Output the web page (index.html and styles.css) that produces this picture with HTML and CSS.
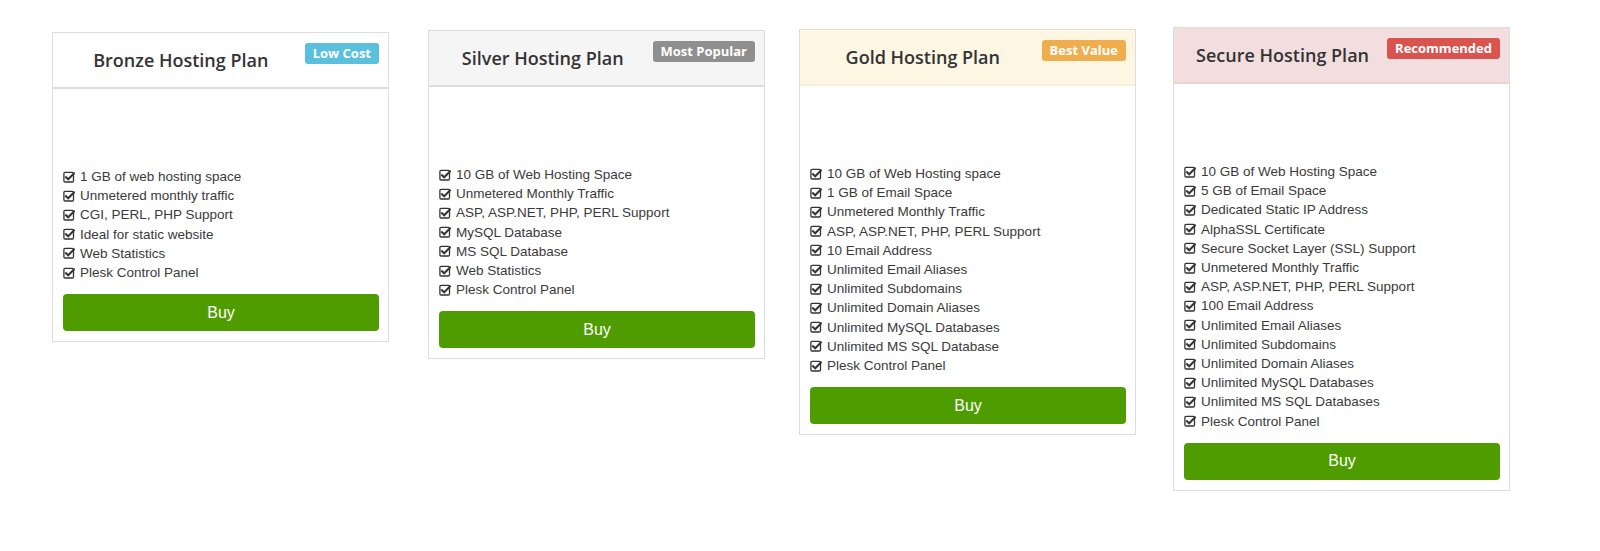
FILE: index.html
```html
<!DOCTYPE html>
<html>
<head>
<meta charset="utf-8">
<link rel="stylesheet" href="styles.css">
</head>
<body>
<svg width="0" height="0" class="defs">
  <symbol id="chk" viewBox="0 0 12 12">
    <rect x="0.9" y="1.4" width="9.6" height="9.6" rx="1.2" fill="none" stroke="#333" stroke-width="1.3"/>
    <path d="M3 6.2 L5.2 8.3 L11 2.3" fill="none" stroke="#333" stroke-width="2" stroke-linecap="square"/>
  </symbol>
</svg>
<div class="plans">
  <div class="plan plan-bronze">
    <div class="plan-head">
      <h3 class="plan-title">Bronze Hosting Plan</h3>
      <span class="badge badge-info">Low Cost</span>
    </div>
    <div class="plan-body">
      <ul class="features">
        <li><svg class="ico"><use href="#chk"/></svg>1 GB of web hosting space</li>
        <li><svg class="ico"><use href="#chk"/></svg>Unmetered monthly traffic</li>
        <li><svg class="ico"><use href="#chk"/></svg>CGI, PERL, PHP Support</li>
        <li><svg class="ico"><use href="#chk"/></svg>Ideal for static website</li>
        <li><svg class="ico"><use href="#chk"/></svg>Web Statistics</li>
        <li><svg class="ico"><use href="#chk"/></svg>Plesk Control Panel</li>
      </ul>
      <button class="buy">Buy</button>
    </div>
  </div>

  <div class="plan plan-silver">
    <div class="plan-head">
      <h3 class="plan-title">Silver Hosting Plan</h3>
      <span class="badge badge-default">Most Popular</span>
    </div>
    <div class="plan-body">
      <ul class="features">
        <li><svg class="ico"><use href="#chk"/></svg>10 GB of Web Hosting Space</li>
        <li><svg class="ico"><use href="#chk"/></svg>Unmetered Monthly Traffic</li>
        <li><svg class="ico"><use href="#chk"/></svg>ASP, ASP.NET, PHP, PERL Support</li>
        <li><svg class="ico"><use href="#chk"/></svg>MySQL Database</li>
        <li><svg class="ico"><use href="#chk"/></svg>MS SQL Database</li>
        <li><svg class="ico"><use href="#chk"/></svg>Web Statistics</li>
        <li><svg class="ico"><use href="#chk"/></svg>Plesk Control Panel</li>
      </ul>
      <button class="buy">Buy</button>
    </div>
  </div>

  <div class="plan plan-gold">
    <div class="plan-head">
      <h3 class="plan-title">Gold Hosting Plan</h3>
      <span class="badge badge-warning">Best Value</span>
    </div>
    <div class="plan-body">
      <ul class="features">
        <li><svg class="ico"><use href="#chk"/></svg>10 GB of Web Hosting space</li>
        <li><svg class="ico"><use href="#chk"/></svg>1 GB of Email Space</li>
        <li><svg class="ico"><use href="#chk"/></svg>Unmetered Monthly Traffic</li>
        <li><svg class="ico"><use href="#chk"/></svg>ASP, ASP.NET, PHP, PERL Support</li>
        <li><svg class="ico"><use href="#chk"/></svg>10 Email Address</li>
        <li><svg class="ico"><use href="#chk"/></svg>Unlimited Email Aliases</li>
        <li><svg class="ico"><use href="#chk"/></svg>Unlimited Subdomains</li>
        <li><svg class="ico"><use href="#chk"/></svg>Unlimited Domain Aliases</li>
        <li><svg class="ico"><use href="#chk"/></svg>Unlimited MySQL Databases</li>
        <li><svg class="ico"><use href="#chk"/></svg>Unlimited MS SQL Database</li>
        <li><svg class="ico"><use href="#chk"/></svg>Plesk Control Panel</li>
      </ul>
      <button class="buy">Buy</button>
    </div>
  </div>

  <div class="plan plan-secure">
    <div class="plan-head">
      <h3 class="plan-title">Secure Hosting Plan</h3>
      <span class="badge badge-danger">Recommended</span>
    </div>
    <div class="plan-body">
      <ul class="features">
        <li><svg class="ico"><use href="#chk"/></svg>10 GB of Web Hosting Space</li>
        <li><svg class="ico"><use href="#chk"/></svg>5 GB of Email Space</li>
        <li><svg class="ico"><use href="#chk"/></svg>Dedicated Static IP Address</li>
        <li><svg class="ico"><use href="#chk"/></svg>AlphaSSL Certificate</li>
        <li><svg class="ico"><use href="#chk"/></svg>Secure Socket Layer (SSL) Support</li>
        <li><svg class="ico"><use href="#chk"/></svg>Unmetered Monthly Traffic</li>
        <li><svg class="ico"><use href="#chk"/></svg>ASP, ASP.NET, PHP, PERL Support</li>
        <li><svg class="ico"><use href="#chk"/></svg>100 Email Address</li>
        <li><svg class="ico"><use href="#chk"/></svg>Unlimited Email Aliases</li>
        <li><svg class="ico"><use href="#chk"/></svg>Unlimited Subdomains</li>
        <li><svg class="ico"><use href="#chk"/></svg>Unlimited Domain Aliases</li>
        <li><svg class="ico"><use href="#chk"/></svg>Unlimited MySQL Databases</li>
        <li><svg class="ico"><use href="#chk"/></svg>Unlimited MS SQL Databases</li>
        <li><svg class="ico"><use href="#chk"/></svg>Plesk Control Panel</li>
      </ul>
      <button class="buy">Buy</button>
    </div>
  </div>
</div>
</body>
</html>
```

FILE: styles.css
```css
* { box-sizing: border-box; }
html, body { margin: 0; padding: 0; background: #fff; }
body { font-family: "Liberation Sans", Arial, sans-serif; color: #333; }
.defs { position: absolute; width: 0; height: 0; }

.plans {
  display: flex;
  align-items: flex-start;
  padding-left: 52px;
}

.plan {
  width: 337px;
  border: 1px solid #dddddd;
  background: #fff;
}
.plan-bronze { margin-top: 32px; }
.plan-silver { margin-top: 30px; margin-left: 39px; }
.plan-gold { margin-top: 29px; margin-left: 34px; }
.plan-secure { margin-top: 27px; margin-left: 37px; }

.plan-head {
  display: flex;
  align-items: flex-start;
  height: 56px;
  padding: 0 9px 0 14px;
  border-bottom: 2px solid #dddddd;
}
.plan-silver .plan-head { background: #f5f5f5; }
.plan-gold .plan-head { background: #fcf6e3; border-bottom-color: #f9efd8; }
.plan-secure .plan-head { background: #f2dede; border-bottom-color: #ecd2d3; }

.plan-title {
  flex: 1;
  margin: 0;
  text-align: center;
  font-family: "Open Sans", sans-serif;
  font-weight: 600;
  font-size: 18px;
  line-height: 54px;
  color: #333;
}

.badge {
  margin-top: 10px;
  margin-left: 10px;
  padding: 2px 8px 3px;
  border-radius: 3px;
  font-family: "Open Sans", sans-serif;
  font-weight: 700;
  font-size: 13px;
  line-height: 16px;
  color: #fff;
  white-space: nowrap;
}
.badge-info { background: #5bc0de; }
.badge-default { background: #8f8f8f; }
.badge-warning { background: #f0ad4e; }
.badge-danger { background: #d9534f; }

.plan-body {
  padding: 78px 9px 10px 10px;
}

.features {
  list-style: none;
  margin: 0 0 12px;
  padding: 0;
  font-size: 13.5px;
  line-height: 19.2px;
  color: #3a3a3a;
}
.features li {
  display: flex;
  align-items: center;
  white-space: nowrap;
}
.ico {
  width: 12px;
  height: 12px;
  margin-right: 5px;
  flex: none;
}

.buy {
  display: block;
  width: 100%;
  height: 37px;
  border: 0;
  border-radius: 4px;
  background: #4e9c00;
  color: #fff;
  font-family: "Liberation Sans", Arial, sans-serif;
  font-size: 16px;
  cursor: pointer;
}
```
